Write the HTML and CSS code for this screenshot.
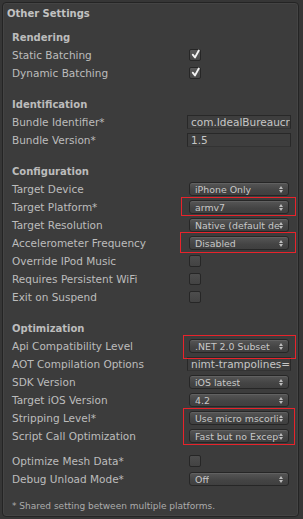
FILE: index.html
```html
<!DOCTYPE html>
<html lang="en">
<head>
  <meta charset="UTF-8" />
  <title>Other Settings</title>
  <meta name="viewport" content="width=device-width, initial-scale=1.0" />
  <link rel="stylesheet" href="styles.css">
</head>
<body>

<div class="panel">
  <div class="title">Other Settings</div>

  <div class="group first">
    <div class="row head">Rendering</div>
    <div class="row">
      <span class="label">Static Batching</span>
      <span class="check"><svg viewBox="0 0 12 12"><path d="M3 6.2 L5.4 9.2 L9.6 1.6" /></svg></span>
    </div>
    <div class="row">
      <span class="label">Dynamic Batching</span>
      <span class="check"><svg viewBox="0 0 12 12"><path d="M3 6.2 L5.4 9.2 L9.6 1.6" /></svg></span>
    </div>
  </div>

  <div class="group">
    <div class="row head">Identification</div>
    <div class="row">
      <span class="label">Bundle Identifier*</span>
      <span class="field">com.IdealBureaucracy.TeamBuilder</span>
    </div>
    <div class="row">
      <span class="label">Bundle Version*</span>
      <span class="field">1.5</span>
    </div>
  </div>

  <div class="group">
    <div class="row head">Configuration</div>
    <div class="row">
      <span class="label">Target Device</span>
      <span class="select"><span class="value">iPhone Only</span><span class="arrows"></span></span>
    </div>
    <div class="row">
      <span class="label">Target Platform*</span>
      <span class="select"><span class="value">armv7</span><span class="arrows"></span></span>
    </div>
    <div class="row">
      <span class="label">Target Resolution</span>
      <span class="select"><span class="value">Native (default device resolution)</span><span class="arrows"></span></span>
    </div>
    <div class="row">
      <span class="label">Accelerometer Frequency</span>
      <span class="select"><span class="value">Disabled</span><span class="arrows"></span></span>
    </div>
    <div class="row">
      <span class="label">Override IPod Music</span>
      <span class="check off"></span>
    </div>
    <div class="row">
      <span class="label">Requires Persistent WiFi</span>
      <span class="check off"></span>
    </div>
    <div class="row">
      <span class="label">Exit on Suspend</span>
      <span class="check off"></span>
    </div>
  </div>

  <div class="group">
    <div class="row head">Optimization</div>
    <div class="row">
      <span class="label">Api Compatibility Level</span>
      <span class="select"><span class="value">.NET 2.0 Subset</span><span class="arrows"></span></span>
    </div>
    <div class="row">
      <span class="label">AOT Compilation Options</span>
      <span class="field">nimt-trampolines=512</span>
    </div>
    <div class="row">
      <span class="label">SDK Version</span>
      <span class="select"><span class="value">iOS latest</span><span class="arrows"></span></span>
    </div>
    <div class="row">
      <span class="label">Target iOS Version</span>
      <span class="select"><span class="value">4.2</span><span class="arrows"></span></span>
    </div>
    <div class="row">
      <span class="label">Stripping Level*</span>
      <span class="select"><span class="value">Use micro mscorlib</span><span class="arrows"></span></span>
    </div>
    <div class="row">
      <span class="label">Script Call Optimization</span>
      <span class="select"><span class="value">Fast but no Exceptions</span><span class="arrows"></span></span>
    </div>
  </div>

  <div class="group tight">
    <div class="row">
      <span class="label">Optimize Mesh Data*</span>
      <span class="check off"></span>
    </div>
    <div class="row">
      <span class="label">Debug Unload Mode*</span>
      <span class="select"><span class="value">Off</span><span class="arrows"></span></span>
    </div>
  </div>

  <p class="note">* Shared setting between multiple platforms.</p>

  <!-- red annotation boxes drawn over the screenshot -->
  <div class="mark mark-platform"></div>
  <div class="mark mark-accel"></div>
  <div class="mark mark-api"></div>
  <div class="mark mark-strip"></div>
</div>

</body>
</html>
```

FILE: styles.css
```css
* {
  box-sizing: border-box;
}
body {
  margin: 0;
  background: #363636;
  font-family: "DejaVu Sans", sans-serif;
  font-size: 10.5px;
  color: #bcbcbc;
}
.panel {
  position: relative;
  margin: 2px 4px 2px 2px;
  padding-bottom: 3px;
  background: #3c3c3c;
  border: 1px solid #242424;
  border-radius: 4px;
  box-shadow: inset 0 0 0 1px #444;
}
.title {
  height: 22px;
  line-height: 22px;
  padding-left: 4px;
  font-size: 10px;
  font-weight: bold;
  color: #c2c2c2;
}
.group {
  margin-top: 13px;
}
.group.first {
  margin-top: 3px;
}
.group.tight {
  margin-top: 7px;
}
.row {
  display: flex;
  align-items: center;
  height: 18px;
  padding-left: 9px;
  white-space: nowrap;
}
.row.head {
  font-size: 10px;
  font-weight: bold;
}
.label {
  flex: none;
  width: 177px;
}

/* checkbox */
.check {
  position: relative;
  width: 12px;
  height: 12px;
  border: 1px solid #262626;
  border-radius: 2px;
  background: linear-gradient(#5a5a5a, #474747);
}
.check.off {
  background: linear-gradient(#4d4d4d, #434343);
}
.check svg {
  position: absolute;
  left: 0;
  top: -1px;
  width: 11px;
  height: 11px;
  overflow: visible;
}
.check path {
  fill: none;
  stroke: #f2f2f2;
  stroke-width: 2;
  stroke-linecap: round;
  stroke-linejoin: round;
}

/* text field */
.field {
  width: 104px;
  height: 14px;
  margin-left: -2px;
  padding: 0 3px;
  overflow: hidden;
  line-height: 12px;
  color: #c6c6c6;
  background: #3e3e3e;
  border: 1px solid #282828;
  border-bottom-color: #333;
}

/* popup */
.select {
  position: relative;
  display: flex;
  align-items: center;
  width: 100px;
  height: 14px;
  padding: 0 9px 0 5px;
  font-size: 9.4px;
  color: #c8c8c8;
  background: linear-gradient(#565656, #444 60%, #3f3f3f);
  border: 1px solid #262626;
  border-radius: 3px;
  box-shadow: inset 0 1px 0 #616161;
}
.value {
  overflow: hidden;
}
.arrows {
  position: absolute;
  right: 5px;
  top: 3px;
  width: 4px;
  height: 7px;
}
.arrows:before,
.arrows:after {
  content: "";
  position: absolute;
  left: 0;
  border-left: 2px solid transparent;
  border-right: 2px solid transparent;
}
.arrows:before {
  top: 0;
  border-bottom: 3px solid #bdbdbd;
}
.arrows:after {
  bottom: 0;
  border-top: 3px solid #bdbdbd;
}

.note {
  margin: 11px 0 0;
  height: 14px;
  line-height: 14px;
  padding-left: 9px;
  font-size: 9px;
  color: #acacac;
}

/* annotations */
.mark {
  position: absolute;
  border: 1px solid #e8232b;
}
.mark-platform {
  left: 178px;
  top: 194px;
  width: 115px;
  height: 19px;
}
.mark-accel {
  left: 177px;
  top: 229px;
  width: 116px;
  height: 21px;
}
.mark-api {
  left: 180px;
  top: 332px;
  width: 113px;
  height: 24px;
}
.mark-strip {
  left: 180px;
  top: 405px;
  width: 112px;
  height: 37px;
}
```
